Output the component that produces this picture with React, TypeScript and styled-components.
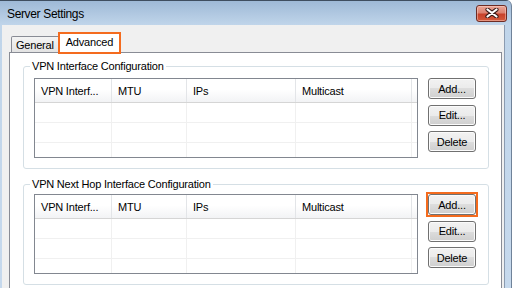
import React from 'react';
import styled, { createGlobalStyle } from 'styled-components';

const GlobalStyle = createGlobalStyle`
  html, body {
    margin: 0;
    padding: 0;
    background: #ffffff;
  }
  body {
    font-family: "Liberation Sans", Arial, sans-serif;
    font-size: 11px;
    letter-spacing: -0.2px;
    color: #000;
  }
  * {
    box-sizing: border-box;
  }
`;

const Window = styled.div`
  width: 512px;
  height: 288px;
  overflow: hidden;
  display: flex;
  flex-direction: column;
  background: linear-gradient(#9db8d6 0px, #c0d5ea 25px, #c6d9ed 100%);
  border-right: 1px solid #6f8299;
  border-top-right-radius: 6px;
`;

const TitleBar = styled.div`
  height: 25px;
  flex: none;
  display: flex;
  align-items: center;
  justify-content: space-between;
  padding: 0 4px 0 7px;
  border-top: 1px solid #3f4e60;
`;

const Title = styled.span`
  font-size: 12px;
  letter-spacing: -0.35px;
  padding-top: 2px;
`;

const CloseButton = styled.div`
  width: 31px;
  height: 17px;
  display: flex;
  align-items: center;
  justify-content: center;
  border: 1px solid #6e2c24;
  border-radius: 3px;
  background: linear-gradient(#eba596 0%, #dc8270 45%, #c8412a 55%, #d45a3b 100%);
  box-shadow: inset 0 0 0 1px rgba(255, 220, 210, 0.45);
`;

const ClientArea = styled.div`
  flex: 1;
  min-height: 0;
  margin: 0 6px 0 2px;
  padding: 7px 2px 0 7px;
  background: #f0f0f0;
  border-right: 1px solid #8b9bb0;
  display: flex;
  flex-direction: column;
`;

const TabStrip = styled.div`
  display: flex;
  align-items: flex-end;
  padding-left: 2px;
  position: relative;
  z-index: 1;
`;

const Tab = styled.div<{ $active?: boolean }>`
  display: flex;
  align-items: center;
  white-space: nowrap;
  ${(p) =>
    p.$active
      ? `
    height: 22px;
    margin: 0 0 -2px -2px;
    padding: 0 6px 2px 6px;
    background: #ffffff;
    border: 2px solid #f46b1e;
    position: relative;
  `
      : `
    height: 16px;
    padding: 0 5px 0 4px;
    background: linear-gradient(#f4f4f4, #e3e3e3);
    border: 1px solid #898c95;
    border-bottom: none;
    border-radius: 2px 2px 0 0;
  `}
`;

const TabPanel = styled.div`
  flex: 1;
  background: #ffffff;
  border: 1px solid #898c95;
  border-bottom: none;
  padding: 7px 12px 0 13px;
`;

const GroupBox = styled.fieldset<{ $top: number; $gap: number }>`
  margin: ${(p) => p.$top}px 0 0 0;
  padding: ${(p) => p.$gap}px 11px 10px 10px;
  border: 1px solid #d5dfe5;
  border-radius: 3px;
  min-width: 0;
`;

const Caption = styled.legend`
  font-size: 11px;
  line-height: 13px;
  padding: 0 2px;
  margin-left: -4px;
`;

const GroupBody = styled.div`
  display: flex;
  gap: 10px;
`;

const COLUMNS = '77px 75px 109px 116px 1fr';

const ListView = styled.div`
  width: 384px;
  height: 80px;
  border: 1px solid #828790;
  background: #ffffff;
  display: flex;
  flex-direction: column;
  overflow: hidden;
`;

const HeaderRow = styled.div`
  flex: none;
  display: grid;
  grid-template-columns: ${COLUMNS};
  height: 24px;
  background: linear-gradient(#ffffff 0%, #ffffff 45%, #f2f3f5 100%);
  border-bottom: 1px solid #d5d5d5;
`;

const HeaderCell = styled.div`
  display: flex;
  align-items: center;
  padding-left: 6px;
  white-space: nowrap;
  overflow: hidden;
  border-right: 1px solid #e3e5e8;
  &:last-child {
    border-right: none;
  }
`;

const Row = styled.div`
  flex: none;
  display: grid;
  grid-template-columns: ${COLUMNS};
  height: 20px;
  border-bottom: 1px solid #f0f0f0;
`;

const Cell = styled.div`
  border-right: 1px solid #f0f0f0;
  &:last-child {
    border-right: none;
  }
`;

const ButtonColumn = styled.div`
  display: flex;
  flex-direction: column;
  gap: 5.5px;
`;

const Button = styled.button`
  width: 48px;
  height: 21px;
  padding: 0;
  font: 11px "Liberation Sans", Arial, sans-serif;
  letter-spacing: -0.2px;
  color: #000;
  border: 1px solid #707070;
  border-radius: 3px;
  background: linear-gradient(#f2f2f2 0%, #ebebeb 50%, #dddddd 50%, #cfcfcf 100%);
  box-shadow: inset 0 0 0 1px #fbfbfb;
`;

const Highlight = styled.span`
  display: flex;
  margin: -2px;
  border: 2px solid #f46b1e;
  background: #ffffff;
`;

const headers = ['VPN Interf...', 'MTU', 'IPs', 'Multicast', ''];

const InterfaceList: React.FC = () => (
  <ListView>
    <HeaderRow>
      {headers.map((h, i) => (
        <HeaderCell key={i}>{h}</HeaderCell>
      ))}
    </HeaderRow>
    {[0, 1, 2].map((r) => (
      <Row key={r}>
        {headers.map((_, i) => (
          <Cell key={i} />
        ))}
      </Row>
    ))}
  </ListView>
);

interface GroupProps {
  caption: string;
  top: number;
  gap: number;
  highlightAdd?: boolean;
}

const InterfaceGroup: React.FC<GroupProps> = ({ caption, top, gap, highlightAdd }) => (
  <GroupBox $top={top} $gap={gap}>
    <Caption>{caption}</Caption>
    <GroupBody>
      <InterfaceList />
      <ButtonColumn>
        {highlightAdd ? (
          <Highlight>
            <Button>Add...</Button>
          </Highlight>
        ) : (
          <Button>Add...</Button>
        )}
        <Button>Edit...</Button>
        <Button>Delete</Button>
      </ButtonColumn>
    </GroupBody>
  </GroupBox>
);

export default function App() {
  return (
    <>
      <GlobalStyle />
      <Window>
        <TitleBar>
          <Title>Server Settings</Title>
          <CloseButton>
            <svg width="14" height="10" viewBox="0 0 14 10">
              <path d="M2.5 1.5 L11.5 8.5 M11.5 1.5 L2.5 8.5" stroke="#3a1a16" strokeWidth="4.2" strokeLinecap="round" />
              <path d="M2.5 1.5 L11.5 8.5 M11.5 1.5 L2.5 8.5" stroke="#ffffff" strokeWidth="2.2" strokeLinecap="round" />
            </svg>
          </CloseButton>
        </TitleBar>
        <ClientArea>
          <TabStrip>
            <Tab>General</Tab>
            <Tab $active>Advanced</Tab>
          </TabStrip>
          <TabPanel>
            <InterfaceGroup caption="VPN Interface Configuration" top={0} gap={5} />
            <InterfaceGroup caption="VPN Next Hop Interface Configuration" top={9} gap={3} highlightAdd />
          </TabPanel>
        </ClientArea>
      </Window>
    </>
  );
}
